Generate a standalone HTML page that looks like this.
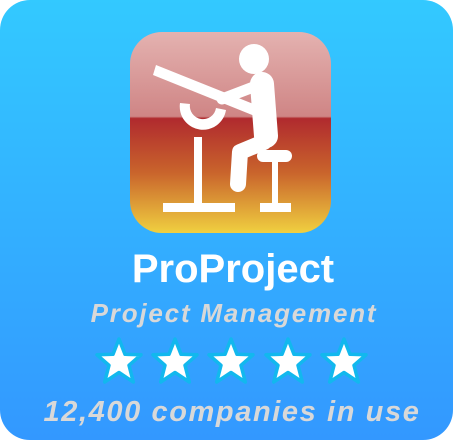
<!DOCTYPE html>
<html><head><style>
html,body{margin:0;padding:0;width:454px;height:442px;background:#fff;overflow:hidden}
.card{position:absolute;left:0;top:0;width:453px;height:440px;border-radius:30px;background:linear-gradient(#33c9ff,#3398ff);}
.t{position:absolute;left:0;width:454px;text-align:center;font-family:"Liberation Sans",sans-serif;font-weight:bold}
</style></head><body>
<div class="card"></div>
<svg style="position:absolute;left:0;top:0" width="454" height="442">
<defs>
<linearGradient id="ig" x1="0" y1="0" x2="0" y2="1">
<stop offset="0" stop-color="#e4b2b0"/>
<stop offset="0.42" stop-color="#cf8585"/>
<stop offset="0.43" stop-color="#b02a2e"/>
<stop offset="0.7" stop-color="#c9642c"/>
<stop offset="1" stop-color="#f0d040"/>
</linearGradient>
</defs>
<rect x="130" y="32" width="201" height="201" rx="32" fill="url(#ig)"/>
<g fill="#fff" stroke="none">
<circle cx="254" cy="59" r="15"/>
<polygon points="153,75 156,65 266,109 262,119"/>
<path d="M180,103 A23,23 0 0 0 226,110 L216,108 A13,13 0 0 1 190,104 Z"/>
<rect x="194" y="137" width="8" height="66"/>
<rect x="163" y="203" width="72" height="9"/>
<rect x="257" y="150" width="35" height="12" rx="6"/>
<rect x="272" y="160" width="6" height="44"/>
<rect x="260" y="203" width="31" height="9"/>
</g>
<g fill="none" stroke="#fff" stroke-linecap="round" stroke-linejoin="round">
<path d="M262,84 L266,136" stroke-width="24"/>
<path d="M264,142 L240,152 L238,184" stroke-width="16"/>
<path d="M256,86 L222,99" stroke-width="11"/>
</g>
<g fill="#fff" stroke="#12b8ee" stroke-width="3.5" stroke-linejoin="round">
<path id="s" d="M0,-23 L6,-7.7 L22,-7.2 L10,3.3 L14.3,20 L0,10.5 L-14.3,20 L-10,3.3 L-22,-7.2 L-6,-7.7 Z" transform="translate(119,362)"/>
<use href="#s" x="56"/><use href="#s" x="112"/><use href="#s" x="169"/><use href="#s" x="225"/>
</g>
</svg>
<div class="t" style="top:247px;font-size:40px;color:#fff;left:6px">ProProject</div>
<div class="t" style="top:298px;font-size:26px;color:#d8d8d8;font-style:italic;letter-spacing:1.8px;left:7px">Project Management</div>
<div class="t" style="top:396px;font-size:29px;color:#d8d8d8;font-style:italic;letter-spacing:1.6px;left:5px">12,400 companies in use</div>
</body></html>
